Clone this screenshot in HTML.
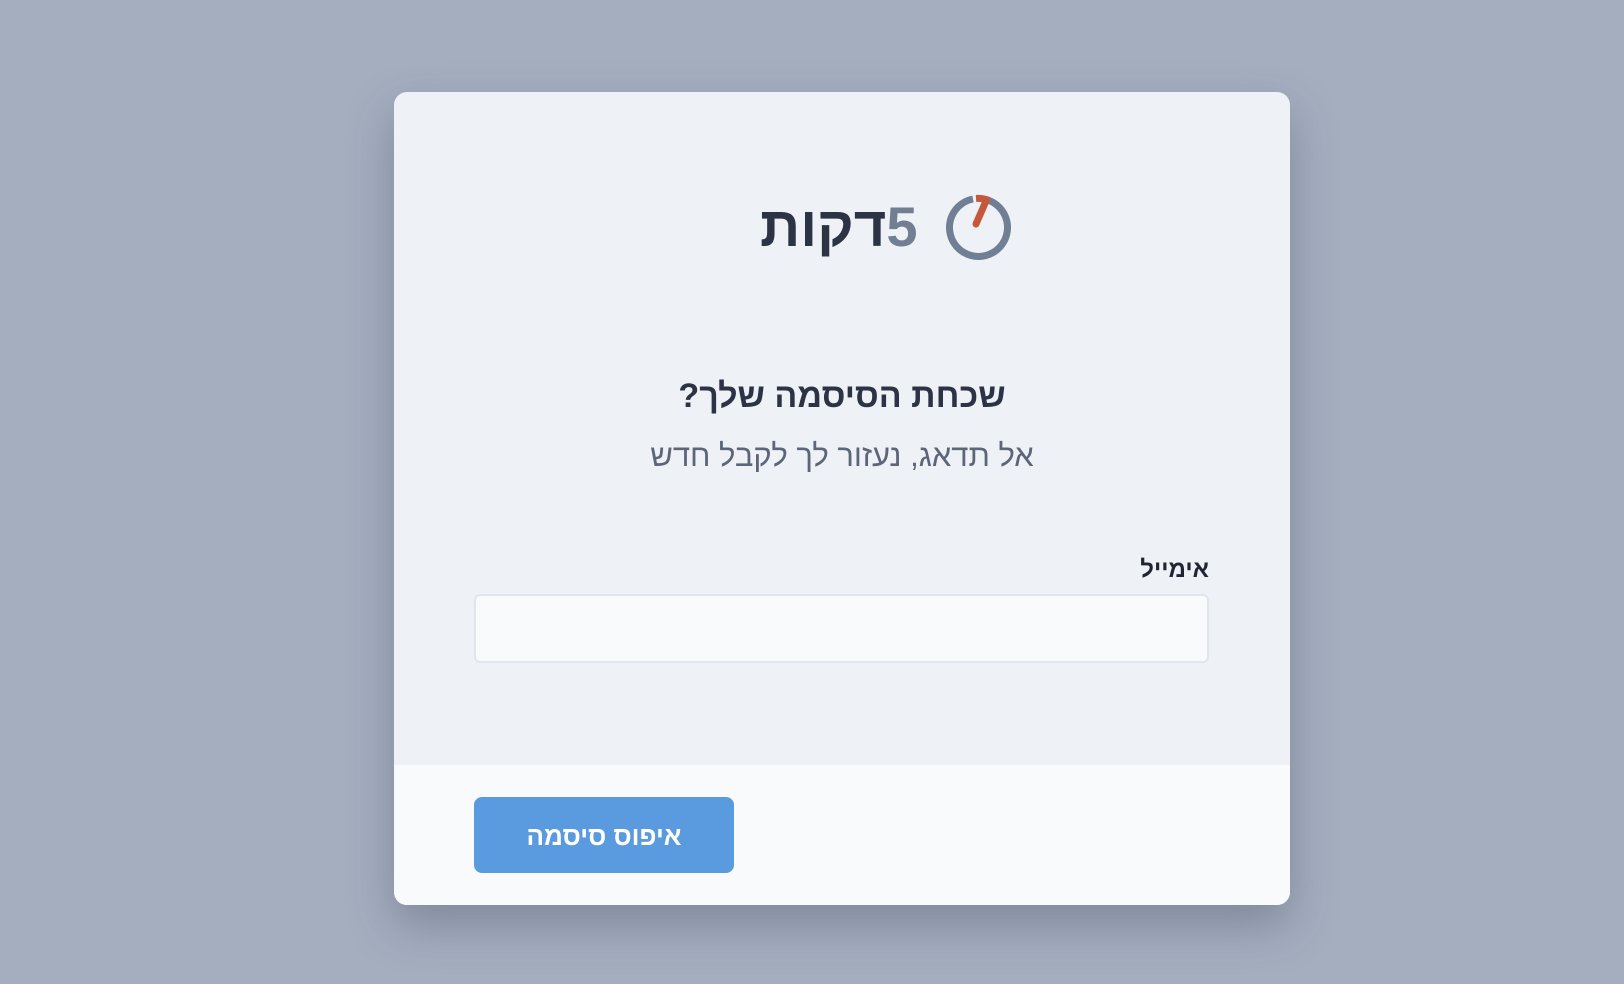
<!DOCTYPE html>
<html><head><meta charset="utf-8"><style>
html,body{margin:0;padding:0;width:1624px;height:984px;background:#a4aebf;font-family:"Liberation Sans","DejaVu Sans",sans-serif;overflow:hidden}
.card{position:absolute;left:394px;top:92px;width:896px;height:813px;background:#eef2f7;border-radius:13px;overflow:hidden;box-shadow:0 20px 45px rgba(60,70,90,.35)}
.foot{position:absolute;left:0;right:0;bottom:0;height:140px;background:#f8fafc}
.t{position:absolute;left:0;right:0;text-align:center;direction:rtl}
.btn{position:absolute;left:80px;top:705px;width:260px;height:76px;background:#5a9ade;border-radius:8px;color:#fff;font-weight:bold;font-size:26px;text-align:center;line-height:78px;direction:rtl}
.inp{position:absolute;left:80px;top:502px;width:735px;height:69px;background:#f8fafc;border:2px solid #e1e6ed;border-radius:6px;box-sizing:border-box}
</style></head><body>
<div class="card">
<div style="position:absolute;left:366px;top:100px;height:70px;font-size:56px;font-weight:bold;line-height:70px;direction:rtl;white-space:nowrap"><span style="color:#717f94">5</span><span style="color:#2c3344">דקות</span></div>
<svg style="position:absolute;left:550px;top:100px" width="70" height="70" viewBox="0 0 70 70">
<path d="M40 7 A29 29 0 1 1 29 7" fill="none" stroke="#717f94" stroke-width="7"/>
<path d="M32 6.5 A29 29 0 0 1 45 8.5" fill="none" stroke="#c5583a" stroke-width="7"/>
<line x1="42" y1="9" x2="32" y2="32" stroke="#c5583a" stroke-width="7" stroke-linecap="round"/>
</svg>
<div class="t" style="top:285px;font-size:34px;font-weight:bold;color:#2c3344">שכחת הסיסמה שלך?</div>
<div class="t" style="top:346px;font-size:31px;color:#5c6678">אל תדאג, נעזור לך לקבל חדש</div>
<div style="position:absolute;right:81px;top:464px;font-size:24px;font-weight:bold;color:#1f2533;direction:rtl">אימייל</div>
<div class="inp"></div>
<div class="foot"></div>
<div class="btn">איפוס סיסמה</div>
</div>
</body></html>
